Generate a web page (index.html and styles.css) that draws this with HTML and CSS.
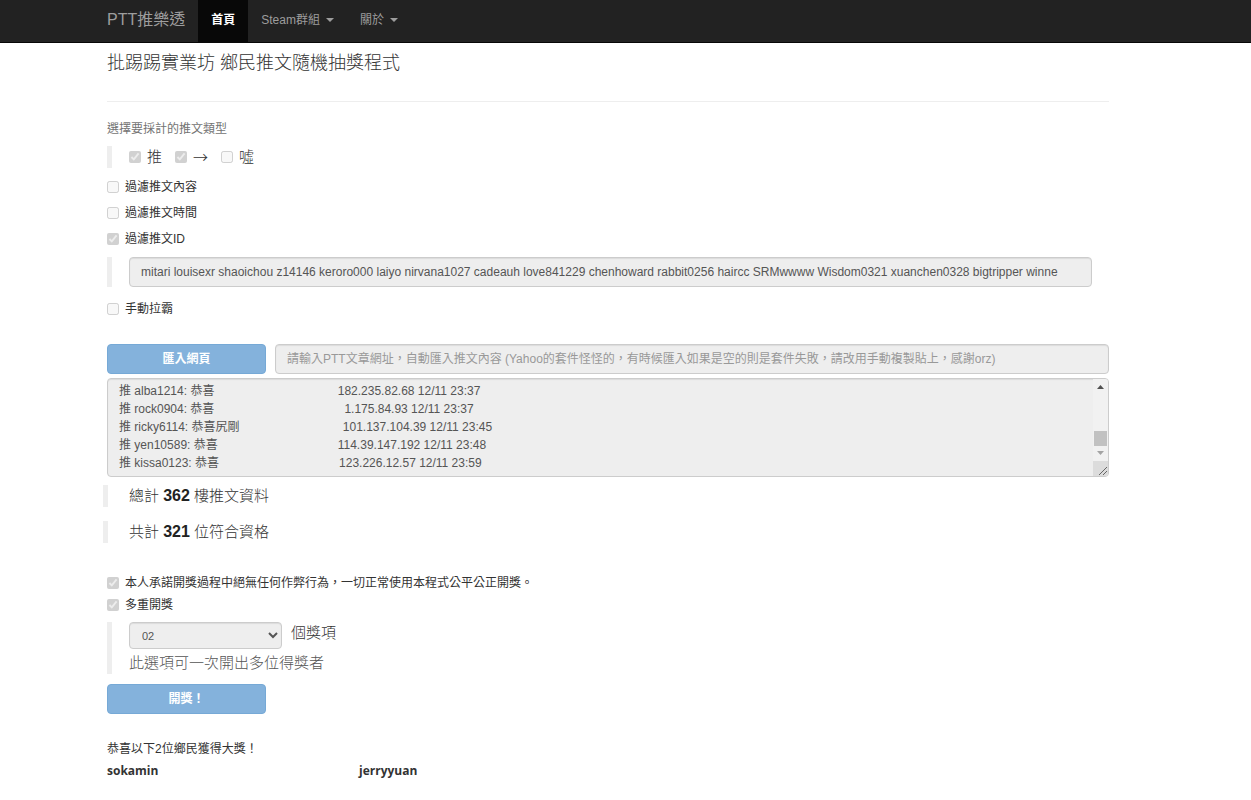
FILE: index.html
```html
<!DOCTYPE html>
<html lang="zh-Hant">
<head>
<meta charset="utf-8">
<title>PTT推樂透</title>
<link rel="stylesheet" href="styles.css">
</head>
<body>
<nav class="navbar">
  <a class="brand" href="#">PTT推樂透</a>
  <a class="nav-link active" href="#">首頁</a>
  <a class="nav-link" href="#">Steam群組 <span class="caret"></span></a>
  <a class="nav-link" href="#">關於 <span class="caret"></span></a>
</nav>
<main class="container">
  <h1 class="title">批踢踢實業坊 鄉民推文隨機抽獎程式</h1>
  <form class="form">
    <p class="hint">選擇要採計的推文類型</p>
    <div class="quote types">
      <label class="check"><input type="checkbox" checked disabled>推</label>
      <label class="check arrow"><input type="checkbox" checked disabled>→</label>
      <label class="check"><input type="checkbox" disabled>噓</label>
    </div>
    <label class="check row"><input type="checkbox" disabled>過濾推文內容</label>
    <label class="check row"><input type="checkbox" disabled>過濾推文時間</label>
    <label class="check row"><input type="checkbox" checked disabled>過濾推文ID</label>
    <div class="quote ids">
      <input class="field" type="text" aria-label="過濾推文ID" disabled value="mitari louisexr shaoichou z14146 keroro000 laiyo nirvana1027 cadeauh love841229 chenhoward rabbit0256 haircc SRMwwww Wisdom0321 xuanchen0328 bigtripper winne">
    </div>
    <label class="check row"><input type="checkbox" disabled>手動拉霸</label>
    <div class="import">
      <button class="btn" type="button" disabled>匯入網頁</button>
      <input class="field" type="text" aria-label="文章網址" disabled placeholder="請輸入PTT文章網址，自動匯入推文內容 (Yahoo的套件怪怪的，有時候匯入如果是空的則是套件失敗，請改用手動複製貼上，感謝orz)">
    </div>
    <div class="log-box">
      <textarea class="field log" aria-label="推文內容" disabled>推 alba1214: 恭喜                                     182.235.82.68 12/11 23:37
推 rock0904: 恭喜                                       1.175.84.93 12/11 23:37
推 ricky6114: 恭喜尻剛                               101.137.104.39 12/11 23:45
推 yen10589: 恭喜                                    114.39.147.192 12/11 23:48
推 kissa0123: 恭喜                                    123.226.12.57 12/11 23:59</textarea>
      <div class="scrollbar" aria-hidden="true">
        <svg class="arrow-up" viewBox="0 0 15 15"><path d="M4 10h7L7.500 6z"/></svg>
        <span class="thumb"></span>
        <svg class="arrow-down" viewBox="0 0 15 15"><path d="M4 5h7L7.500 9z"/></svg>
        <svg class="grip" viewBox="0 0 15 15"><path d="M6 14l8-8M10 14l4-4"/></svg>
      </div>
    </div>
    <p class="quote total">總計 <strong>362</strong> 樓推文資料</p>
    <p class="quote total">共計 <strong>321</strong> 位符合資格</p>
    <div class="options">
      <label class="check"><input type="checkbox" checked disabled>本人承諾開獎過程中絕無任何作弊行為，一切正常使用本程式公平公正開獎。</label>
      <label class="check"><input type="checkbox" checked disabled>多重開獎</label>
    </div>
    <div class="quote prizes">
      <div class="prize-count">
        <select class="field select" id="prizes" disabled><option>02</option></select>
        <label for="prizes">個獎項</label>
      </div>
      <p class="note">此選項可一次開出多位得獎者</p>
    </div>
    <button class="btn" type="button" disabled>開獎！</button>
  </form>
  <p class="result">恭喜以下2位鄉民獲得大獎！</p>
  <div class="winners"><strong>sokamin</strong><strong>jerryyuan</strong></div>
</main>
</body>
</html>
```
FILE: styles.css
```css
* { box-sizing: border-box; }
body {
  margin: 0;
  background: #fff;
  color: #333;
  font: 12px/18px "Liberation Sans", "Noto Sans CJK TC", sans-serif;
}
p, h1 { margin: 0; }
button, input, select, textarea { font: inherit; color: inherit; }

.navbar {
  display: flex;
  height: 43px;
  padding: 0 142px 0 107px;
  background: #222;
  border-bottom: 1px solid #080808;
}
.brand, .nav-link {
  display: flex;
  align-items: center;
  padding-bottom: 2px;
  color: #9d9d9d;
  text-decoration: none;
  white-space: nowrap;
}
.brand { padding-right: 13px; font-size: 16px; }
.nav-link { padding-left: 13px; padding-right: 13px; }
.nav-link.active { background: #080808; color: #fff; font-weight: bold; }
.caret {
  margin-left: 6px;
  border: 4px solid transparent;
  border-top-color: #9d9d9d;
  border-bottom: 0;
}

.container { padding: 0 142px 0 107px; }
.title {
  height: 59px;
  padding-top: 8px;
  border-bottom: 1px solid #eee;
  font-size: 18px;
  line-height: 24px;
  font-weight: 300;
}
.form { display: flex; flex-direction: column; }
.hint { margin-top: 18px; color: #737373; }
.quote {
  padding-left: 17px;
  border-left: 5px solid #eee;
  font-size: 15px;
  line-height: 22px;
  font-weight: 300;
}
.check { display: flex; align-items: center; }
.check input { flex: none; width: 12px; height: 12px; margin: 0 6px 0 0; }
.types { display: flex; gap: 13px; margin: 8px 0 10px; }
.arrow { font-family: "Noto Sans CJK TC", sans-serif; }
.row { margin-bottom: 8px; }
.ids { padding-right: 17px; margin: 1px 0 13px; }
.field {
  display: block;
  width: 100%;
  height: 30px;
  padding: 0 11px;
  border: 1px solid #ccc;
  border-radius: 4px;
  background: #eee;
  box-shadow: inset 0 1px 1px rgba(0, 0, 0, .08);
  color: #555;
  font-size: 12px;
  font-weight: 400;
}
.field::placeholder { color: #999; }
.import { display: flex; gap: 9px; margin: 18px 0 4px; }
.btn {
  flex: none;
  width: 159px;
  height: 30px;
  padding: 0;
  border: 1px solid #76a9d6;
  border-radius: 4px;
  background: #84b2dc;
  color: #fff;
  font-weight: bold;
}
.log-box { position: relative; }
.log { height: 99px; padding: 3px 26px 3px 11px; resize: none; overflow: hidden; white-space: pre; }
.scrollbar {
  position: absolute;
  top: 1px;
  right: 1px;
  bottom: 1px;
  display: flex;
  flex-direction: column;
  width: 15px;
  background: #f1f1f1;
  border-radius: 0 3px 3px 0;
  overflow: hidden;
}
.scrollbar svg { flex: none; width: 15px; height: 15px; }
.arrow-up { fill: #505050; }
.arrow-down { fill: #a3a3a3; }
.thumb { height: 15px; margin: auto 1px 0 1px; background: #c1c1c1; }
.grip { background: #dcdcdc; fill: none; stroke: #666; }
.total { margin: 8px 0 6px -4px; padding-left: 21px; }
.total strong { color: #222; font-size: 16px; font-weight: 700; }
.options { display: flex; flex-direction: column; gap: 4px; margin-top: 25px; }
.prizes { margin: 8px 0 10px; }
.prize-count { display: flex; gap: 9px; }
.select { width: 153px; height: 27px; padding: 0 8px; font-size: 11px; opacity: 1; }
.note { margin-top: 3px; color: #555; }
.result { margin-top: 26px; }
.winners {
  display: grid;
  grid-template-columns: 252px 1fr;
  margin-top: 4px;
  font-family: "Open Sans", "Noto Sans CJK TC", sans-serif;
}
```
